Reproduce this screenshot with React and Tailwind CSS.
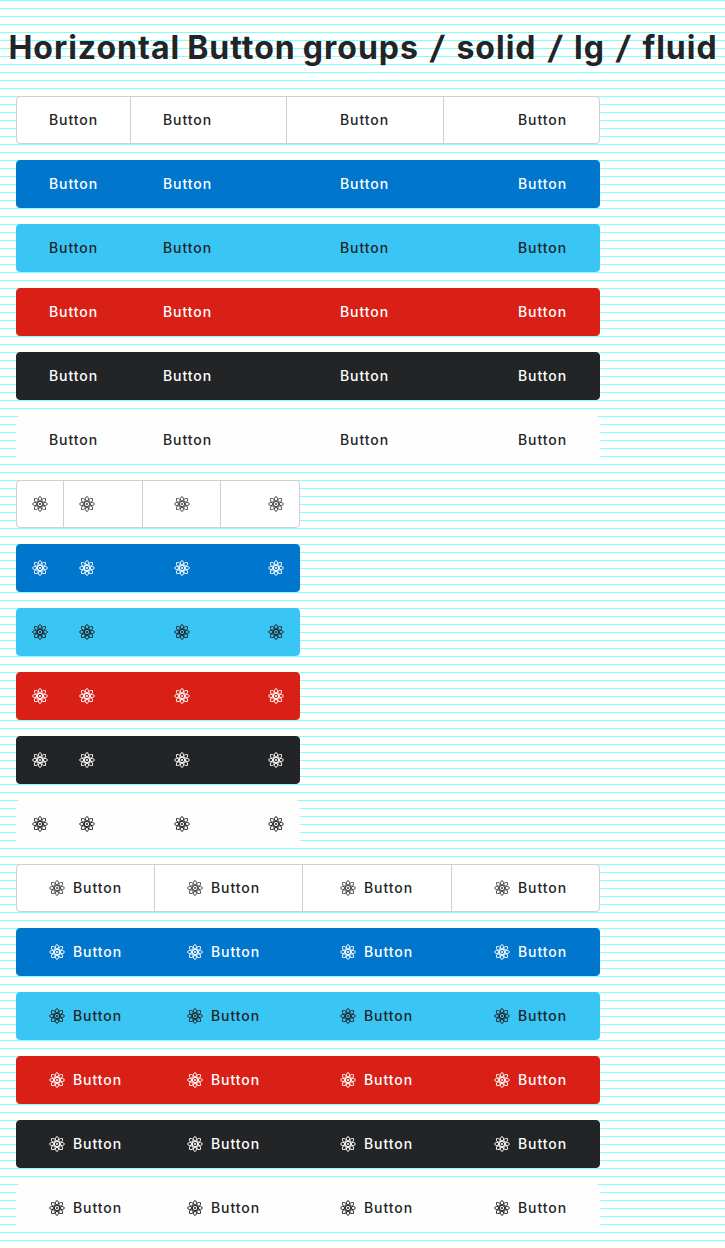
import { useId } from 'react';

const VARIANTS = [
  { name: 'outline', group: 'bg-white border-[#cfd0d6] text-[#222426]', divider: 'border-[#cfd0d6]', icon: 'text-[#46484c]' },
  { name: 'primary', group: 'bg-[#0076cc] border-[#0076cc] text-white', divider: 'border-[#0075ca]', icon: '' },
  { name: 'accent', group: 'bg-[#3ac6f5] border-[#3ac6f5] text-[#222426]', divider: 'border-[#37c4f4]', icon: '' },
  { name: 'danger', group: 'bg-[#d82016] border-[#d82016] text-white', divider: 'border-[#d51f16]', icon: '' },
  { name: 'dark', group: 'bg-[#222426] border-[#222426] text-white', divider: 'border-[#222426]', icon: '' },
  { name: 'plain', group: 'bg-[#fefefe] border-[#fefefe] text-[#222426]', divider: 'border-[#fbfbfb]', icon: '' },
];

const LAYOUTS = [
  { id: 'text', icon: false, label: true, width: 'w-[584px]', columns: 'grid-cols-[113px_156px_157px_156px]', pad: 'px-8' },
  { id: 'icon', icon: true, label: false, width: 'w-[284px]', columns: 'grid-cols-[46px_79px_78px_79px]', pad: 'px-[15px]' },
  { id: 'both', icon: true, label: true, width: 'w-[584px]', columns: 'grid-cols-[137px_148px_149px_148px]', pad: 'px-8' },
];

const ALIGN = ['justify-start', 'justify-start', 'justify-center', 'justify-end'];

const ORBITS = [0, 45, 90, 135];

function AtomIcon({ className }) {
  const maskId = useId();
  return (
    <svg viewBox="0 0 16 16" className={`size-4 shrink-0 ${className}`} fill="none" stroke="currentColor" strokeWidth="0.95" aria-hidden="true">
      <mask id={maskId} maskUnits="userSpaceOnUse" x="0" y="0" width="16" height="16">
        <rect width="16" height="16" fill="white" stroke="none" />
        <circle cx="8" cy="8" r="2" fill="black" stroke="none" />
      </mask>
      <g mask={`url(#${maskId})`}>
        {ORBITS.map((angle) => (
          <ellipse key={angle} cx="8" cy="8" rx="7.5" ry="2.2" transform={`rotate(${angle} 8 8)`} />
        ))}
      </g>
      <circle cx="8" cy="8" r="1.05" fill="currentColor" stroke="none" />
    </svg>
  );
}

function ButtonGroup({ layout, variant }) {
  return (
    <div className={`grid h-12 overflow-hidden rounded-[4px] border ${layout.width} ${layout.columns} ${variant.group}`}>
      {ALIGN.map((align, i) => (
        <button
          key={i}
          type="button"
          className={`flex h-full items-center gap-2 whitespace-nowrap ${layout.pad} ${align} ${i === 2 && layout.label ? 'pr-[33px]' : ''} ${i ? `border-l ${variant.divider}` : ''}`}
        >
          {layout.icon && <AtomIcon className={variant.icon} />}
          {layout.label && <span className="w-[49px] text-left text-[14px] leading-4 font-[550] tracking-[0.91px]">Button</span>}
        </button>
      ))}
    </div>
  );
}

function Slash() {
  return <span className="mx-[5px] inline-block -skew-x-[8deg]">/</span>;
}

export default function App() {
  return (
    <main className="h-[1248px] overflow-hidden bg-white bg-[linear-gradient(#7fffff_1px,transparent_1px)] bg-[length:100%_8px] font-['Inter',sans-serif]">
      <h1 className="h-24 pt-7 pl-px text-center text-[32px] leading-10 font-bold tracking-[0.99px] [word-spacing:-1.5px] whitespace-nowrap text-[#222426]">
        Horizontal Button groups <Slash /> solid <Slash /> lg <Slash /> fluid
      </h1>
      <div className="flex flex-col gap-4 px-4">
        {LAYOUTS.map((layout) =>
          VARIANTS.map((variant) => <ButtonGroup key={layout.id + variant.name} layout={layout} variant={variant} />)
        )}
      </div>
    </main>
  );
}
